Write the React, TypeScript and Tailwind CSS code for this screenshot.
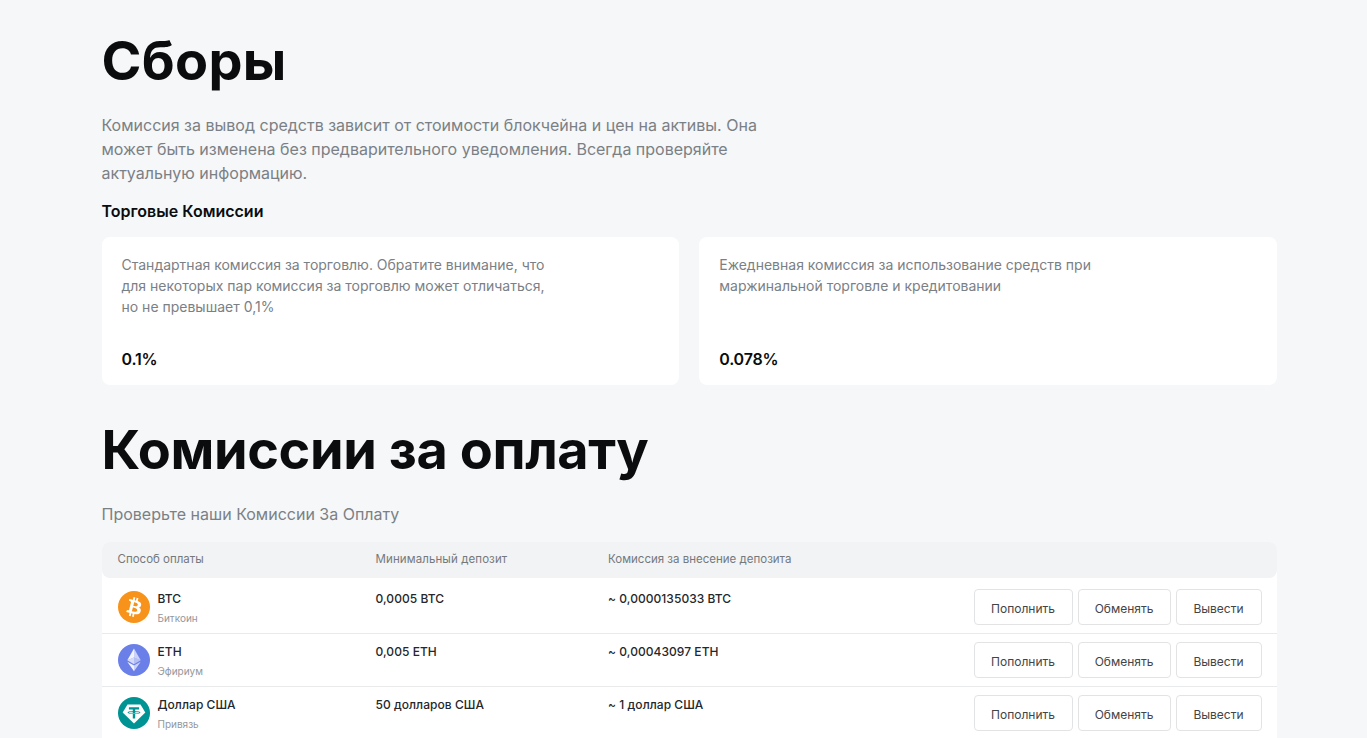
import { FC } from "react";

interface Fee {
  description: string;
  value: string;
}

interface Method {
  code: string;
  name: string;
  minimum: string;
  fee: string;
  icon: FC;
}

const BitcoinIcon: FC = () => (
  <svg viewBox="0 0 32 32" className="size-8 flex-none" aria-hidden="true">
    <circle cx="16" cy="16" r="16" fill="#f7931a" />
    <path
      fill="#fff"
      d="M23.189 14.02c.314-2.096-1.283-3.223-3.465-3.975l.708-2.84-1.728-.43-.69 2.765c-.454-.114-.92-.22-1.385-.326l.695-2.783L15.596 6l-.708 2.839c-.376-.086-.746-.17-1.104-.26l.002-.009-2.384-.595-.46 1.846s1.283.294 1.256.312c.7.175.826.638.805 1.006l-.806 3.235c.048.012.11.03.18.057l-.183-.045-1.13 4.532c-.086.212-.303.531-.793.41.018.025-1.256-.313-1.256-.313l-.858 1.978 2.25.561c.418.105.828.215 1.231.318l-.715 2.872 1.727.43.708-2.84c.472.127.93.245 1.378.357l-.706 2.828 1.728.43.715-2.866c2.948.558 5.164.333 6.097-2.333.752-2.146-.037-3.385-1.588-4.192 1.13-.26 1.98-1.003 2.207-2.538zm-3.95 5.538c-.533 2.147-4.148.986-5.32.695l.95-3.805c1.172.293 4.929.872 4.37 3.11zm.535-5.569c-.487 1.953-3.495.96-4.47.717l.86-3.45c.975.243 4.118.696 3.61 2.733z"
    />
  </svg>
);

const EthereumIcon: FC = () => (
  <svg viewBox="0 0 32 32" className="size-8 flex-none" aria-hidden="true">
    <circle cx="16" cy="16" r="16" fill="#6b7fe8" />
    <g fill="#fff">
      <path fillOpacity=".65" d="M16 4.5v9l6.7 2.8z" />
      <path fillOpacity=".9" d="M16 4.5 9.3 16.3l6.7-2.8z" />
      <path fillOpacity=".65" d="M16 21.6v5.7l6.7-9.5z" />
      <path fillOpacity=".9" d="M16 27.3v-5.7l-6.7-3.8z" />
      <path fillOpacity=".5" d="m16 20.3 6.7-4-6.7-2.8z" />
      <path fillOpacity=".7" d="m9.3 16.3 6.7 4v-6.8z" />
    </g>
  </svg>
);

const TetherIcon: FC = () => (
  <svg viewBox="0 0 32 32" className="size-8 flex-none" aria-hidden="true">
    <circle cx="16" cy="16" r="16" fill="#009393" />
    <path fill="#fff" d="M9.5 7.4h13l4.8 8L16 26.5 4.7 15.4z" />
    <path
      fill="#009393"
      d="M10.9 10.3h10.2v2.2h-3.9v1.6c3.2.2 5.2.8 5.2 1.5s-2 1.3-5.2 1.5v4.4h-2.4v-4.4c-3.2-.2-5.2-.8-5.2-1.5s2-1.3 5.2-1.5v-1.6h-3.9z"
    />
    <path
      fill="#fff"
      fillOpacity=".8"
      d="M14.8 14.7v1.4c.8.1 1.6.1 2.4 0v-1.4c2.5.1 4.2.4 4.2.9s-2.4 1-5.4 1-5.4-.5-5.4-1 1.7-.8 4.2-.9z"
    />
  </svg>
);

const fees: Fee[] = [
  {
    description:
      "Стандартная комиссия за торговлю. Обратите внимание, что для некоторых пар комиссия за торговлю может отличаться, но не превышает 0,1%",
    value: "0.1%",
  },
  {
    description:
      "Ежедневная комиссия за использование средств при маржинальной торговле и кредитовании",
    value: "0.078%",
  },
];

const methods: Method[] = [
  {
    code: "BTC",
    name: "Биткоин",
    minimum: "0,0005 BTC",
    fee: "~ 0,0000135033 BTC",
    icon: BitcoinIcon,
  },
  {
    code: "ETH",
    name: "Эфириум",
    minimum: "0,005 ETH",
    fee: "~ 0,00043097 ETH",
    icon: EthereumIcon,
  },
  {
    code: "Доллар США",
    name: "Привязь",
    minimum: "50 долларов США",
    fee: "~ 1 доллар США",
    icon: TetherIcon,
  },
];

const actions = [
  { label: "Пополнить", width: "w-[99px]" },
  { label: "Обменять", width: "w-[93px]" },
  { label: "Вывести", width: "w-[86px]" },
];

const columns = "grid grid-cols-[258px_232.5px_1fr_auto] pl-4 pr-[15.5px]";

const App: FC = () => {
  return (
    <div className="h-screen overflow-hidden bg-[#f5f7f9] font-['Inter',sans-serif] text-[#0b0c0e]">
      <div className="ml-[101.5px] w-[1175.5px] pt-[27px]">
        <h1 className="text-[54px] leading-[68px] font-bold tracking-[0.3px]">
          Сборы
        </h1>
        <p className="mt-[18px] w-[680px] text-base text-[#7b8085]">
          Комиссия за вывод средств зависит от стоимости блокчейна и цен на
          активы. Она может быть изменена без предварительного уведомления.
          Всегда проверяйте актуальную информацию.
        </p>
        <h2 className="mt-[14px] text-base font-semibold">
          Торговые Комиссии
        </h2>
        <div className="mt-[14px] grid grid-cols-2 gap-5">
          {fees.map((item) => (
            <div
              key={item.value}
              className="flex h-[148px] flex-col justify-between rounded-lg bg-white px-5 pt-[17px] pb-[14px]"
            >
              <p className="w-[430px] text-sm leading-[21px] text-[#7b8085]">
                {item.description}
              </p>
              <p className="text-base font-semibold tracking-[-0.2px]">
                {item.value}
              </p>
            </div>
          ))}
        </div>

        <h1 className="mt-[31px] text-[54px] leading-[68px] font-bold tracking-[-0.4px]">
          Комиссии за оплату
        </h1>
        <p className="mt-[18px] text-base text-[#7b8085]">
          Проверьте наши Комиссии За Оплату
        </p>
        <div className="mt-4 rounded-t-lg bg-white">
          <div
            className={`${columns} h-9 items-center rounded-lg bg-[#f1f3f4] text-[11.5px] text-[#74797e]`}
          >
            <span>Способ оплаты</span>
            <span className="tracking-[0.1px]">Минимальный депозит</span>
            <span>Комиссия за внесение депозита</span>
          </div>
          <div className="pt-[3px]">
            {methods.map((method) => {
              const Icon = method.icon;
              return (
                <div
                  key={method.name}
                  className={`${columns} h-[53px] border-b border-[#e9eaeb] text-xs leading-5 font-medium tracking-[0.05px] text-[#25272a]`}
                >
                  <div className="flex items-center gap-2">
                    <Icon />
                    <div className="self-start pt-2">
                      <p>{method.code}</p>
                      <p className="-mt-px text-[10px] leading-5 font-normal tracking-normal text-[#94979b]">
                        {method.name}
                      </p>
                    </div>
                  </div>
                  <p className="pt-2">{method.minimum}</p>
                  <p className="pt-2">{method.fee}</p>
                  <div className="flex items-center gap-[5px]">
                    {actions.map((action) => (
                      <button
                        key={action.label}
                        className={`${action.width} h-9 rounded border border-[#e2e3e5] pt-[3px] text-xs font-normal tracking-normal text-[#424447]`}
                      >
                        {action.label}
                      </button>
                    ))}
                  </div>
                </div>
              );
            })}
          </div>
        </div>
      </div>
    </div>
  );
};

export default App;
